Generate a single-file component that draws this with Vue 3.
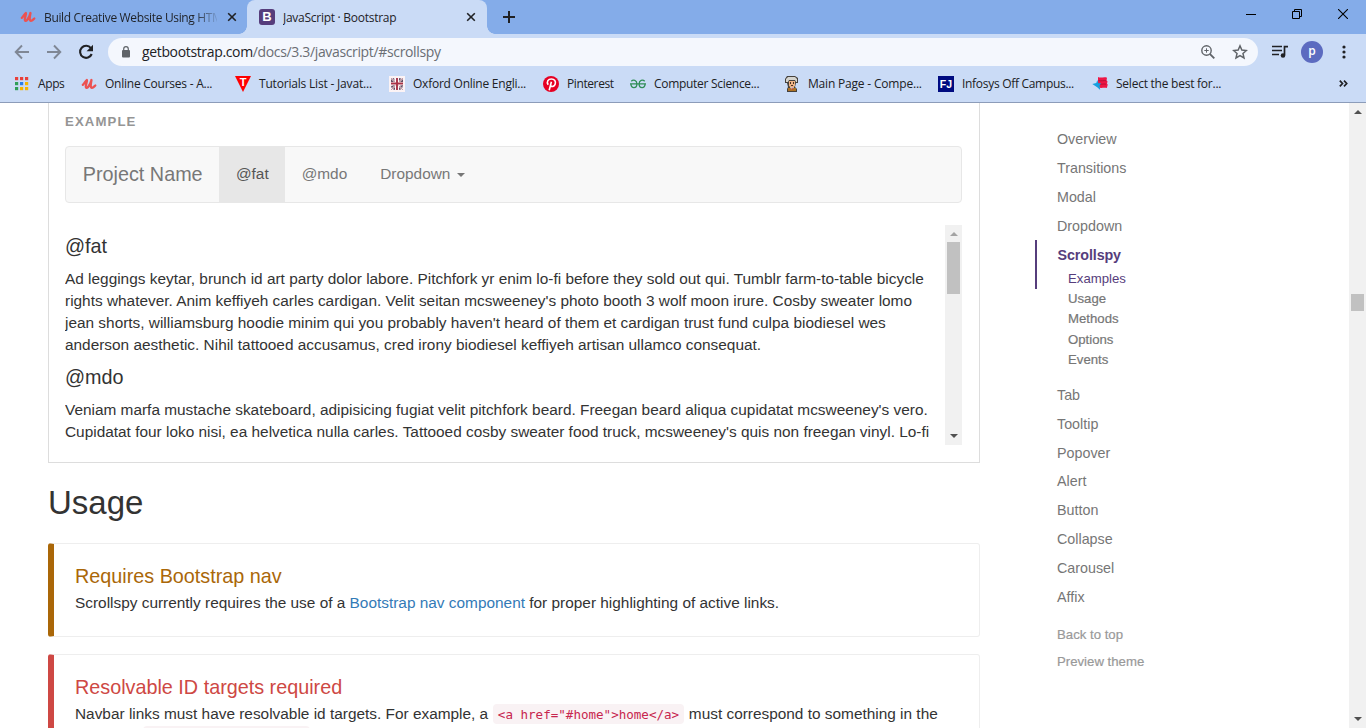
<script setup>
const bookmarks = [
  { icon: 'apps', label: 'Apps', x: 14 },
  { icon: 'udemy', label: 'Online Courses - A...', x: 81 },
  { icon: 'tut', label: 'Tutorials List - Javat...', x: 235 },
  { icon: 'oxford', label: 'Oxford Online Engli...', x: 389 },
  { icon: 'pin', label: 'Pinterest', x: 543 },
  { icon: 'gfg', label: 'Computer Science...', x: 630 },
  { icon: 'main', label: 'Main Page - Compe...', x: 784 },
  { icon: 'fj', label: 'Infosys Off Campus...', x: 938 },
  { icon: 'select', label: 'Select the best for...', x: 1092 },
].map((b, i, all) => ({ ...b, width: (all[i + 1] ? all[i + 1].x : 1246) - b.x }))

const udemy = 'M1.800 8.800C3.300 7.600 4.600 4.600 5.900 3.900C6.700 4.900 4.100 9.600 4.900 11.300C6.200 13.300 9 9 10.500 4C9.800 8 9 11.600 11 11.800C12.300 11.800 13.400 10.300 14.300 9.500'
const before = ['Overview', 'Transitions', 'Modal', 'Dropdown']
const subs = ['Usage', 'Methods', 'Options', 'Events']
const after = ['Tab', 'Tooltip', 'Popover', 'Alert', 'Button', 'Collapse', 'Carousel', 'Affix']
const appColors = ['#e8403a', '#e8403a', '#e8403a', '#2f9e58', '#2b7de9', '#f5b400', '#2f9e58', '#f5b400', '#f5b400']
const fat = [
  'Ad leggings keytar, brunch id art party dolor labore. Pitchfork yr enim lo-fi before they sold out qui. Tumblr farm-to-table bicycle',
  "rights whatever. Anim keffiyeh carles cardigan. Velit seitan mcsweeney's photo booth 3 wolf moon irure. Cosby sweater lomo",
  "jean shorts, williamsburg hoodie minim qui you probably haven't heard of them et cardigan trust fund culpa biodiesel wes",
  'anderson aesthetic. Nihil tattooed accusamus, cred irony biodiesel keffiyeh artisan ullamco consequat.',
]
const mdo = [
  "Veniam marfa mustache skateboard, adipisicing fugiat velit pitchfork beard. Freegan beard aliqua cupidatat mcsweeney's vero.",
  "Cupidatat four loko nisi, ea helvetica nulla carles. Tattooed cosby sweater food truck, mcsweeney's quis non freegan vinyl. Lo-fi",
]
</script>

<template>
  <div class="window">
    <header class="tabstrip">
      <div class="tab idle">
        <svg class="fav" viewBox="0 0 16 16"><path :d="udemy" fill="none" stroke="#ec5252" stroke-width="2.300" stroke-linecap="round" stroke-linejoin="round"/></svg>
        <span class="tab-title fade">Build Creative Website Using HTM</span>
        <svg class="close" viewBox="0 0 10 10"><path d="M1.200 1.200l7.600 7.600M8.800 1.200L1.200 8.800" stroke="#202124" stroke-width="1.600"/></svg>
      </div>
      <div class="tab active">
        <span class="bs">B</span>
        <span class="tab-title second">JavaScript · Bootstrap</span>
        <svg class="close" viewBox="0 0 10 10"><path d="M1.200 1.200l7.600 7.600M8.800 1.200L1.200 8.800" stroke="#202124" stroke-width="1.600"/></svg>
      </div>
      <svg class="plus" viewBox="0 0 12 12"><path d="M6 0v12M0 6h12" stroke="#202124" stroke-width="2"/></svg>
      <div class="controls">
        <svg width="10" height="10"><path d="M0 5.500h10" stroke="#000"/></svg>
        <svg width="10" height="10" fill="none" stroke="#000"><path d="M.5 2.500h7v7h-7zM2.500 2.500v-2h7v7h-2"/></svg>
        <svg width="10" height="10"><path d="M0 0l10 10M10 0L0 10" stroke="#000" stroke-width="1.100"/></svg>
      </div>
    </header>

    <div class="toolbar">
      <svg class="back" viewBox="0 0 16 16" fill="none" stroke="#7f8795" stroke-width="1.900"><path d="M15 8H2M8 1.500L1.700 8 8 14.500"/></svg>
      <svg class="fwd" viewBox="0 0 16 16" fill="none" stroke="#7f8795" stroke-width="1.900"><path d="M1 8h13M8 1.500L14.300 8 8 14.500"/></svg>
      <svg class="reload" viewBox="0 0 16 16"><path d="M12.900 4.200A6 6 0 1 0 13.700 10" fill="none" stroke="#202124" stroke-width="2.100"/><path d="M15 .8v6.400H8.600z" fill="#202124"/></svg>
      <div class="omnibox">
        <svg class="lock" viewBox="0 0 10 12"><rect x="1" y="4" width="8" height="7.500" rx="1" fill="#5f6368"/><path d="M2.700 4.500V3a2.300 2.300 0 0 1 4.600 0v1.500" fill="none" stroke="#5f6368" stroke-width="1.200"/></svg>
        <span class="url"><b>getbootstrap.com</b>/docs/3.3/javascript/#scrollspy</span>
        <svg class="mag" viewBox="0 0 14 14" fill="none" stroke="#5f6368"><circle cx="5.500" cy="5.500" r="4.700" stroke-width="1.400"/><path d="M8.800 8.800L13.300 13.300" stroke-width="1.900"/><path d="M5.500 3.300v4.400M3.300 5.500h4.400"/></svg>
        <svg class="star" viewBox="0 0 14 14"><path d="M7 1.600l1.600 3.700 4 .4-3 2.600.9 3.900L7 10.200l-3.500 2 .9-3.900-3-2.600 4-.4z" fill="none" stroke="#5f6368" stroke-width="1.300"/></svg>
      </div>
      <svg class="music" viewBox="0 0 16 14"><path d="M0 1.500h10M0 5.500h10M0 9.500h7" stroke="#202124" stroke-width="1.500"/><path d="M12.500 10V1.700H16" fill="none" stroke="#202124" stroke-width="1.700"/><circle cx="11" cy="10.500" r="2.300" fill="#202124"/></svg>
      <span class="avatar">p</span>
      <svg class="menu" viewBox="0 0 4 14" fill="#202124"><circle cx="2" cy="2" r="1.600"/><circle cx="2" cy="7" r="1.600"/><circle cx="2" cy="12" r="1.600"/></svg>
    </div>

    <nav class="bookmarks">
      <div v-for="b in bookmarks" :key="b.label" class="bookmark" :style="{ width: b.width + 'px' }">
        <svg class="bm-icon" viewBox="0 0 16 16">
          <g v-if="b.icon === 'apps'"><rect v-for="(c, i) in appColors" :key="i" :x="1 + (i % 3) * 5" :y="1 + Math.floor(i / 3) * 5" width="3.200" height="3.200" :fill="c"/></g>
          <path v-else-if="b.icon === 'udemy'" :d="udemy" fill="none" stroke="#ec5252" stroke-width="2.300" stroke-linecap="round" stroke-linejoin="round"/>
          <g v-else-if="b.icon === 'tut'"><path d="M0 0h16L8 16z" fill="#f00"/><text x="8" y="9.800" text-anchor="middle" class="tt">T</text></g>
          <g v-else-if="b.icon === 'oxford'"><path d="M0 0h16v16H0z" fill="#fbf3f5"/><path d="M2 3l3-1 1 4-4 1zM10 2l4 1v4l-4-1zM2 10l4-1v5l-3-1zM10 10l4-1-1 4-3 1z" fill="#655066"/><path d="M2 2l12 12M14 2L2 14" stroke="#fff" stroke-width="1.400"/><path d="M2 2l12 12M14 2L2 14" stroke="#a65263" stroke-width=".6"/><path d="M8 2v12M2 7.500h12" stroke="#fff" stroke-width="3.200"/><path d="M8 2v12M2 7.500h12" stroke="#a93247" stroke-width="1.900"/></g>
          <g v-else-if="b.icon === 'pin'"><circle cx="8" cy="8" r="8" fill="#e60023"/><path d="M6.200 14.200L8.400 5.800M5.200 8.800C3.100 5.500 5.300 3 8.400 3c3.200 0 4.600 2.200 3.800 4.900-.8 2.800-3.700 3.300-4.700 1.400" fill="none" stroke="#fff" stroke-width="1.600"/></g>
          <g v-else-if="b.icon === 'gfg'" fill="none" stroke="#2f8d56" stroke-width="1.300"><path d="M1.300 5.200C3.200 3.200 6.900 4 6.900 7.900c0 4.600-6 5.200-6-.1M0 7.900h16M14.700 5.200C12.800 3.200 9.100 4 9.100 7.900c0 4.600 6 5.200 6-.1"/></g>
          <g v-else-if="b.icon === 'main'"><path d="M3 0h8l3 2v5h-2l-1 4 2 2v3H3v-3l1-2-1-4H1V3z" fill="#45413d"/><path d="M4 1h7l2 2v3h-1l-1-2H5L4 6H2V3z" fill="#d5d4ce"/><path d="M5 5h6v5l-2 1.500H7L5 10z" fill="#edb385"/><path d="M6 6h1v2H6zM9 6h1v2H9zM7 9h2v1H7z" fill="#4c3022"/><path d="M4 12h8v3H4z" fill="#ad7122"/><path d="M6 11h4l-2 3z" fill="#eee"/><path d="M7.500 11.500h1.200V14H7.500z" fill="#b33127"/></g>
          <g v-else-if="b.icon === 'fj'"><path d="M0 0h16v16H0z" fill="#000b80"/><text x="8" y="11.600" text-anchor="middle" class="fj-mark">FJ</text></g>
          <g v-else><path d="M6 1c3 1.500 6-.8 9 .7l-.5 3 1 .6-.5 2.700.8.5-1 3.500C11.500 11 9 13 6 11z" fill="#ee1645"/><path d="M6.500 4.500c3 1 5-.4 8 .3M6 7.900c3 1 5-.4 8 .3" stroke="#a90c33" fill="none" stroke-width=".8"/><path d="M5.300 4l1.100 3.200H9L7.600 9.600l.6 4.400-3-2.800L.3 8l4-1z" fill="#159fdf"/></g>
        </svg>
        <span class="bm-label" :class="b.icon">{{ b.label }}</span>
      </div>
      <svg class="more" viewBox="0 0 9 7"><path d="M.8.700L3.500 3.500.8 6.300M5 .7l2.700 2.800L5 6.300" fill="none" stroke="#202124" stroke-width="1.700"/></svg>
    </nav>

    <div class="viewport">
      <main class="page">
        <section class="example">
          <div class="ex-label">EXAMPLE</div>
          <div class="navbar">
            <a class="brand">Project Name</a>
            <a class="on">@fat</a>
            <a>@mdo</a>
            <a>Dropdown<i class="caret"></i></a>
          </div>
          <div class="spy">
            <div class="spy-text">
              <h4>@fat</h4>
              <p><span v-for="l in fat" :key="l">{{ l }}</span></p>
              <h4>@mdo</h4>
              <p><span v-for="l in mdo" :key="l">{{ l }}</span></p>
            </div>
            <div class="bar">
              <i class="up off"></i>
              <i class="thumb"></i>
              <i class="down"></i>
            </div>
          </div>
        </section>

        <h2>Usage</h2>

        <section class="callout warn">
          <h4>Requires Bootstrap nav</h4>
          <p>Scrollspy currently requires the use of a <a>Bootstrap nav component</a> for proper highlighting of active links.</p>
        </section>
        <section class="callout danger">
          <h4>Resolvable ID targets required</h4>
          <p>Navbar links must have resolvable id targets. For example, a <code>&lt;a href="#home"&gt;home&lt;/a&gt;</code> must correspond to something in the</p>
          <div class="code-top"></div>
        </section>
      </main>

      <aside class="side">
        <a v-for="s in before" :key="s" class="item">{{ s }}</a>
        <div class="current">
          <a class="item cur">Scrollspy</a>
          <a class="sub cursub">Examples</a>
        </div>
        <a v-for="s in subs" :key="s" class="sub">{{ s }}</a>
        <div class="rest">
          <a v-for="s in after" :key="s" class="item">{{ s }}</a>
        </div>
        <div class="foot">
          <a>Back to top</a>
          <a>Preview theme</a>
        </div>
      </aside>

      <div class="bar main-bar">
        <i class="up"></i>
        <i class="thumb"></i>
        <i class="down"></i>
      </div>
    </div>
  </div>
</template>

<style>
html, body { overflow: hidden; background: #fff; }
</style>

<style scoped>
* { box-sizing: border-box; }
svg { display: block; flex: none; }
i { display: block; }
.window { width: 1366px; height: 728px; display: flex; flex-direction: column; overflow: hidden; font-family: "Liberation Sans", Arial, sans-serif; background: #fff; }
.tabstrip { height: 34px; flex: none; background: #84ace9; display: flex; align-items: center; }
.tab { display: flex; align-items: center; height: 34px; font: 12px "Open Sans", "Noto Sans", sans-serif; color: #1f2227; }
.idle { width: 247px; padding-left: 20px; }
.active { width: 240px; padding-left: 12px; background: #cadbf6; border-radius: 8px 8px 0 0; position: relative; }
.active::before, .active::after { content: ""; position: absolute; bottom: 0; width: 8px; height: 8px; }
.active::before { left: -8px; background: radial-gradient(circle at 0 0, transparent 7.5px, #cadbf6 8px); }
.active::after { right: -8px; background: radial-gradient(circle at 100% 0, transparent 7.5px, #cadbf6 8px); }
.fav { width: 16px; height: 16px; }
.tab-title { margin-left: 8px; width: 173px; white-space: nowrap; overflow: hidden; letter-spacing: -.34px; }
.fade { -webkit-mask-image: linear-gradient(90deg, #000 150px, transparent 176px); mask-image: linear-gradient(90deg, #000 150px, transparent 176px); }
.second { width: 176px; letter-spacing: -.27px; }
.close { width: 10px; height: 10px; margin-left: 10px; }
.active .close { margin-left: 7px; }
.bs { width: 16px; height: 16px; border-radius: 3px; background: #563d7c; color: #fff; font: bold 13px/16px "Liberation Sans", sans-serif; text-align: center; flex: none; }
.plus { width: 12px; height: 12px; margin-left: 16px; }
.controls { margin-left: auto; margin-right: 18px; display: flex; gap: 36px; height: 28px; align-items: center; align-self: flex-start; }
.toolbar { height: 36px; flex: none; background: #cadbf6; display: flex; align-items: center; padding-left: 14px; }
.back, .fwd { width: 16px; height: 16px; }
.fwd { margin-left: 16px; }
.reload { width: 16px; height: 16px; margin-left: 16px; }
.omnibox { margin-left: 14px; margin-right: 14px; width: 1150px; height: 28px; border-radius: 14px; background: #f4f7fd; display: flex; align-items: center; }
.lock { width: 10px; height: 12px; margin-left: 13px; }
.url { margin-left: 11px; font: 14px/26px "Open Sans", "Noto Sans", sans-serif; letter-spacing: -.35px; color: #6a6e74; flex: 1; }
.url b { font-weight: 400; color: #202124; }
.mag { width: 14px; height: 14px; }
.star { width: 16px; height: 16px; margin: 0 10px 0 17px; }
.music { width: 16px; height: 14px; }
.avatar { width: 22px; height: 22px; border-radius: 50%; background: #5c6bc0; color: #fff; font: 600 12px/19px "Open Sans", sans-serif; text-align: center; margin-left: 13px; }
.menu { width: 4px; height: 14px; margin-left: 19px; }
.bookmarks { height: 33px; flex: none; background: #cadbf6; border-bottom: 1px solid #8c9cb9; display: flex; align-items: center; padding: 0 0 5px 14px; }
.bookmark { display: flex; align-items: center; gap: 8px; flex: none; }
.bm-icon { width: 16px; height: 16px; }
.bm-label { font: 12px/16px "Open Sans", "Noto Sans", sans-serif; letter-spacing: -.24px; color: #202124; white-space: nowrap; }
.bm-label.apps, .bm-label.pin { letter-spacing: -.4px; }
.bm-label.gfg, .bm-label.fj { letter-spacing: -.3px; }
.bm-label.tut, .bm-label.main { letter-spacing: -.19px; }
.tt { font: bold 11px "Liberation Sans", sans-serif; fill: #fff; }
.fj-mark { font: bold 10.500px "Liberation Sans", sans-serif; fill: #fff; }
.more { width: 9px; height: 7px; margin-left: 93px; }

.viewport { height: 625px; display: flex; overflow: hidden; }
.page { width: 932px; margin-left: 48px; flex: none; color: #333; font-size: 15.400px; line-height: 22px; }
.example { height: 360px; border: 1px solid #ddd; border-top: 0; padding: 9px 17px 0 16px; }
.ex-label { height: 18px; font-size: 13.200px; line-height: 19px; font-weight: 700; color: #959595; letter-spacing: 1.100px; }
.navbar { margin-top: 16px; height: 57px; border: 1px solid #e7e7e7; border-radius: 4px; background: #f8f8f8; display: flex; color: #777; line-height: 54px; }
.navbar a { padding: 0 16.500px 1px; display: flex; align-items: center; }
.navbar .brand { font-size: 19.800px; line-height: 55px; padding: 0 16.800px; }
.navbar .on { background: #e7e7e7; color: #555; }
.caret { margin: 2px 0 0 7px; border: 4.400px solid transparent; border-top-color: #777; border-bottom: 0; }
.spy { margin-top: 22px; height: 220px; display: flex; overflow: hidden; }
.spy-text { width: 880px; overflow: hidden; }
.spy-text h4 { margin: 0 0 11px; padding-top: 10px; font-size: 19.800px; line-height: 22px; font-weight: 400; }
.spy-text p { margin: 0; }
.spy-text p span { display: block; white-space: nowrap; }
.bar { width: 17px; background: #f1f1f1; display: flex; flex-direction: column; align-items: center; flex: none; }
.up { margin-top: 7px; border: 4px solid transparent; border-bottom: 4px solid #505050; border-top: 0; }
.up.off { border-bottom-color: #a3a3a3; }
.down { margin: auto 0 7px; border: 4px solid transparent; border-top: 4px solid #505050; border-bottom: 0; }
.thumb { width: 13px; height: 52px; margin-top: 6px; background: #c1c1c1; }
h2 { margin: 20px 0 0; font-size: 33px; line-height: 40px; height: 60px; font-weight: 400; }
.callout { border: 1px solid #eee; border-left: 6px solid #aa6708; border-radius: 3px; height: 94px; padding: 21px 21px; margin-bottom: 17px; }
.callout h4 { margin: 0 0 5px; font-size: 19.800px; line-height: 22px; font-weight: 400; color: #aa6708; }
.callout p { margin: 0; white-space: nowrap; }
.callout a { color: #337ab7; }
.danger { height: 130px; border-left-color: #ce4844; }
.danger h4 { color: #ce4844; }
code { font: 12.550px "DejaVu Sans Mono", monospace; color: #c7254e; background: #f9f2f4; border-radius: 4px; padding: 2.500px 4.400px; margin: 0 1px; vertical-align: 1px; }
.code-top { width: 167px; height: 20px; margin: 1px 0 0 68px; border-radius: 4px; background: #f9f2f4; }

.side { margin-left: 55px; width: 314px; padding-top: 21.700px; color: #767676; font-size: 14.300px; }
.side a { display: block; }
.item { height: 28.900px; line-height: 28.800px; padding: .7px 0 0 22px; }
.current { border-left: 2px solid #563d7c; height: 49px; }
.cur { font-weight: 700; color: #563d7c; padding-left: 20.500px; letter-spacing: -.1px; }
.sub { height: 20.200px; line-height: 20px; padding-left: 33px; font-size: 13.200px; -webkit-text-stroke: .2px; }
.cursub { color: #563d7c; padding-left: 31px; -webkit-text-stroke: 0; }
.rest { margin-top: 11px; }
.rest .item { height: 28.800px; padding-top: .1px; }
.foot { margin-top: 9.900px; color: #999; font-size: 13.200px; -webkit-text-stroke: .2px; }
.foot a { line-height: 27px; padding-left: 22px; }
.main-bar .thumb { height: 17px; margin-top: 180px; }
</style>
